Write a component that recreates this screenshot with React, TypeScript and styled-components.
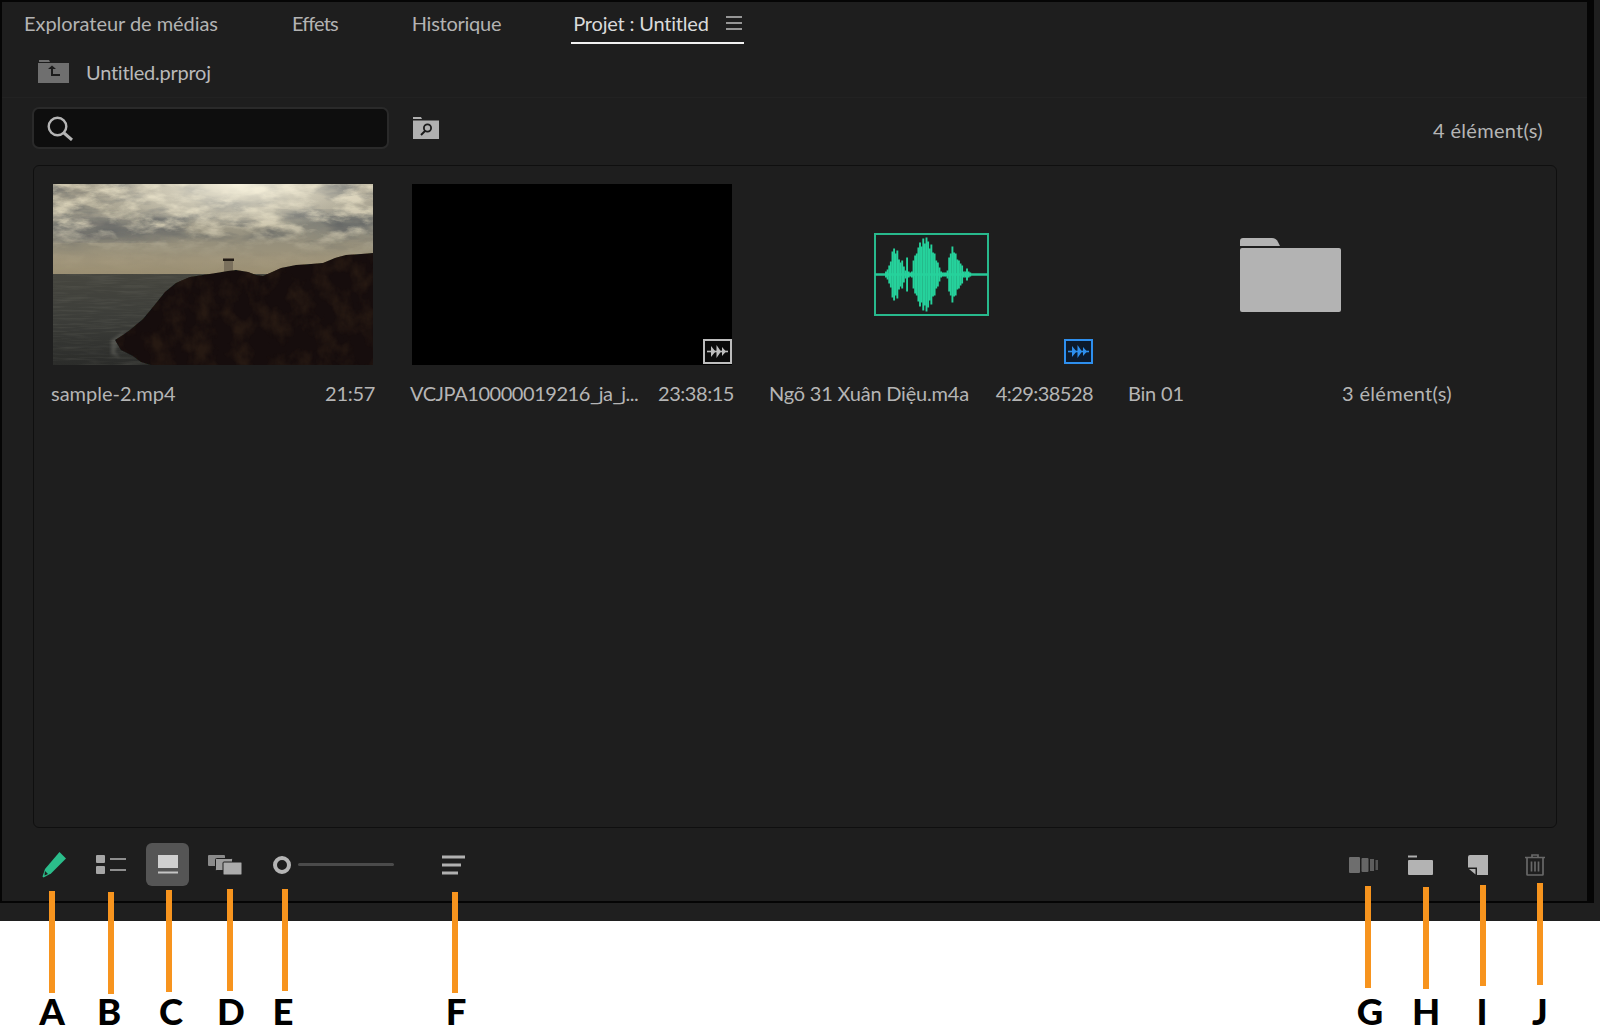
import React from 'react';
import styled, { createGlobalStyle } from 'styled-components';

type Clip = {
  name: string;
  info: string;
  nameSpacing: number;
  infoSpacing: number;
};

type Marker = {
  letter: string;
  x: number;
  top: number;
  height: number;
  labelX: number;
};

const GlobalStyle = createGlobalStyle`
  html, body {
    margin: 0;
    background: #fff;
  }
  * {
    box-sizing: border-box;
  }
`;

const Page = styled.div`
  position: relative;
  width: 1600px;
  height: 1033px;
  overflow: hidden;
  background: #fff;
  font-family: Lato, "Open Sans", sans-serif;
`;

const Frame = styled.div`
  height: 921px;
  background: #1f1f1f;
`;

const Panel = styled.div`
  display: flex;
  flex-direction: column;
  width: 1594px;
  height: 903px;
  background: #1e1e1e;
  border-top: 2px solid #050505;
  border-left: 2px solid #050505;
  border-right: 7px solid #050505;
  border-bottom: 2px solid #050505;
`;

const Tabs = styled.div`
  display: flex;
  align-items: flex-start;
  gap: 70px;
  height: 45px;
  padding-left: 20px;
`;

const Tab = styled.div<{ $active?: boolean; $spacing?: number }>`
  display: flex;
  align-items: center;
  gap: 17px;
  height: 42px;
  margin-left: ${(p) => (p.$active ? -2 : 0)}px;
  padding: 1px 2px 0;
  font-size: 20px;
  letter-spacing: ${(p) => p.$spacing ?? -0.05}px;
  color: ${(p) => (p.$active ? '#dadada' : '#b3b3b3')};
  border-bottom: 2px solid ${(p) => (p.$active ? '#f2f2f2' : 'transparent')};
`;

const Breadcrumb = styled.div`
  display: flex;
  align-items: center;
  gap: 17px;
  height: 50px;
  margin: 0 0 0 36px;
  font-size: 20px;
  letter-spacing: -0.25px;
  color: #b9b9b9;
`;

const SearchRow = styled.div`
  display: flex;
  align-items: center;
  height: 63px;
  margin-bottom: 6px;
  padding: 0 44px 0 30px;
  border-top: 1px solid #222;
`;

const SearchBox = styled.div`
  display: flex;
  align-items: center;
  width: 357px;
  height: 42px;
  padding-left: 13px;
  background: #0e0e0e;
  border: 2px solid #2a2a2a;
  border-radius: 7px;
`;

const FolderSearch = styled.div`
  display: flex;
  margin-left: 24px;
`;

const Count = styled.div`
  margin: 4px 0 0 auto;
  font-size: 20px;
  letter-spacing: 0.3px;
  color: #b5b5b5;
`;

const Content = styled.div`
  width: 1524px;
  height: 666px;
  margin-left: 31px;
  padding: 18px 19px;
  border: 1px solid #0f0f0f;
  border-radius: 6px;
`;

const Grid = styled.div`
  display: grid;
  grid-template-columns: repeat(4, 320px);
  column-gap: 39px;
`;

const Card = styled.div`
  display: flex;
  flex-direction: column;
`;

const Thumb = styled.div<{ $black?: boolean }>`
  position: relative;
  display: flex;
  align-items: center;
  justify-content: center;
  height: 181px;
  background: ${(p) => (p.$black ? '#000' : 'transparent')};
`;

const Badge = styled.div<{ $right: number }>`
  position: absolute;
  right: ${(p) => p.$right}px;
  bottom: 1px;
  display: flex;
`;

const CardLabel = styled.div`
  display: flex;
  justify-content: space-between;
  align-items: center;
  height: 24px;
  margin: 16px -2px 0 -2px;
  font-size: 20px;
  color: #b5b5b5;
`;

const LabelText = styled.span<{ $spacing: number }>`
  letter-spacing: ${(p) => p.$spacing}px;
`;

const Toolbar = styled.div`
  display: flex;
  align-items: center;
  height: 73px;
  padding: 0 31px 0 30px;
`;

const ToolButton = styled.div<{ $selected?: boolean }>`
  display: flex;
  align-items: center;
  justify-content: center;
  width: 43px;
  height: 43px;
  margin-right: 14px;
  border-radius: 6px;
  background: ${(p) => (p.$selected ? '#555' : 'transparent')};

  &:last-child {
    margin-right: 0;
  }
`;

const ZoomSlider = styled.div`
  display: flex;
  align-items: center;
  width: 121px;
  margin: 0 38px 0 13px;
`;

const ZoomKnob = styled.div`
  flex: none;
  width: 18px;
  height: 18px;
  border: 4px solid #b5b5b5;
  border-radius: 50%;
`;

const ZoomTrack = styled.div`
  flex: 1;
  height: 3px;
  margin-left: 7px;
  background: #4b4b4b;
  border-radius: 2px;
`;

const ToolGroup = styled.div`
  display: flex;
  margin-left: auto;
`;

const MarkerLine = styled.div<{ $x: number; $top: number; $height: number }>`
  position: absolute;
  left: ${(p) => p.$x}px;
  top: ${(p) => p.$top}px;
  width: 6px;
  height: ${(p) => p.$height}px;
  background: #f7941e;
`;

const MarkerLetter = styled.div<{ $x: number }>`
  position: absolute;
  left: ${(p) => p.$x - 30}px;
  top: 991px;
  width: 60px;
  text-align: center;
  font-family: Lato, sans-serif;
  font-size: 36.5px;
  font-weight: 900;
  line-height: 40px;
  color: #000;
`;

const clips: Clip[] = [
  { name: 'sample-2.mp4', info: '21:57', nameSpacing: 0, infoSpacing: -0.3 },
  { name: 'VCJPA10000019216_ja_j...', info: '23:38:15', nameSpacing: -0.45, infoSpacing: -0.45 },
  { name: 'Ngõ 31 Xuân Diệu.m4a', info: '4:29:38528', nameSpacing: -0.2, infoSpacing: -0.55 },
  { name: 'Bin 01', info: '3 élément(s)', nameSpacing: -0.2, infoSpacing: 0.3 },
];

const markers: Marker[] = [
  { letter: 'A', x: 49, top: 891, height: 102, labelX: 52 },
  { letter: 'B', x: 108, top: 892, height: 102, labelX: 109 },
  { letter: 'C', x: 166, top: 890, height: 102, labelX: 171 },
  { letter: 'D', x: 227, top: 889, height: 102, labelX: 231 },
  { letter: 'E', x: 282, top: 889, height: 102, labelX: 283 },
  { letter: 'F', x: 452, top: 892, height: 101, labelX: 456 },
  { letter: 'G', x: 1365, top: 886, height: 102, labelX: 1370 },
  { letter: 'H', x: 1423, top: 887, height: 102, labelX: 1426 },
  { letter: 'I', x: 1480, top: 885, height: 101, labelX: 1482 },
  { letter: 'J', x: 1537, top: 883, height: 102, labelX: 1540 },
];

const waveHeights = [
  3, 5, 9, 13, 23, 26, 21, 24, 15, 12, 14, 8, 4, 17, 3, 2, 3, 14, 19, 21, 27, 32, 28, 36, 31, 37, 33, 26,
  30, 22, 21, 14, 12, 7, 3, 2, 2, 2, 4, 17, 21, 28, 22, 21, 15, 14, 11, 9, 3, 3, 6, 3, 2,
];

const MenuIcon = () => (
  <svg width="16" height="14" viewBox="0 0 16 14">
    <path d="M0 1h16M0 7h16M0 13h16" stroke="#969696" strokeWidth="2.2" />
  </svg>
);

const UpFolderIcon = () => (
  <svg width="31" height="23" viewBox="0 0 31 23">
    <path d="M1 0h10l1 2H1z" fill="#6f6f6f" />
    <path d="M0 3h31v20H0z" fill="#6f6f6f" />
    <path d="M10 9l4-3.5L18 9h-3v5h7v2h-9V9z" fill="#1b1b1b" />
  </svg>
);

const SearchIcon = () => (
  <svg width="26" height="25" viewBox="0 0 26 25">
    <circle cx="10.5" cy="10.5" r="8.8" fill="none" stroke="#b5b5b5" strokeWidth="2.4" />
    <path d="M17 17l8 7" stroke="#b5b5b5" strokeWidth="3" />
  </svg>
);

const FolderSearchIcon = () => (
  <svg width="26" height="22" viewBox="0 0 26 22">
    <path d="M0 0h8l1 2H0z" fill="#b0b0b0" />
    <path d="M0 3.5h26V22H0z" fill="#b0b0b0" />
    <circle cx="14.5" cy="11" r="3.6" fill="none" stroke="#1b1b1b" strokeWidth="1.8" />
    <path d="M12 14l-4 4" stroke="#1b1b1b" strokeWidth="2" />
  </svg>
);

const CLIFF =
  'M62 156L70 151L77 146L90 135L100 123L112 108L123 99L137 93L150 91L163 89L175 87L183 86L195 88L203 91L210 92L217 89L228 84L243 81L258 80L270 79L282 74L293 71L308 70L320 69V181H98L88 178L80 172L68 166Z';

const PhotoThumb = () => (
  <svg width="320" height="181" viewBox="0 0 320 181">
    <defs>
      <linearGradient id="sky" x1="0" y1="0" x2="0" y2="1">
        <stop offset="0" stopColor="#a39d8b" />
        <stop offset="0.35" stopColor="#a7a290" />
        <stop offset="0.6" stopColor="#938e7c" />
        <stop offset="0.85" stopColor="#a0957a" />
        <stop offset="1" stopColor="#9a8e72" />
      </linearGradient>
      <linearGradient id="sea" x1="0" y1="0" x2="0" y2="1">
        <stop offset="0" stopColor="#46463f" />
        <stop offset="0.5" stopColor="#3c3d39" />
        <stop offset="1" stopColor="#2b2c2a" />
      </linearGradient>
      <radialGradient id="glow" cx="0.58" cy="0" r="0.5">
        <stop offset="0" stopColor="#fbf6e2" stopOpacity="0.95" />
        <stop offset="1" stopColor="#f1ecd8" stopOpacity="0" />
      </radialGradient>
      <linearGradient id="cloudFade" x1="0" y1="0" x2="0" y2="1">
        <stop offset="0" stopColor="#fff" />
        <stop offset="0.45" stopColor="#fff" stopOpacity="0.8" />
        <stop offset="0.75" stopColor="#fff" stopOpacity="0.1" />
        <stop offset="1" stopColor="#fff" stopOpacity="0" />
      </linearGradient>
      <mask id="cloudMask">
        <rect width="320" height="90" fill="url(#cloudFade)" />
      </mask>
      <clipPath id="cliffClip">
        <path d={CLIFF} />
      </clipPath>
      <filter id="clouds" x="0" y="0" width="100%" height="100%" colorInterpolationFilters="sRGB">
        <feTurbulence type="fractalNoise" baseFrequency="0.035 0.085" numOctaves="5" seed="7" />
        <feColorMatrix values="0 0 0 0 0.85  0 0 0 0 0.82  0 0 0 0 0.72  3 0 0 0 -1.3" />
      </filter>
      <filter id="shade" x="0" y="0" width="100%" height="100%" colorInterpolationFilters="sRGB">
        <feTurbulence type="fractalNoise" baseFrequency="0.022 0.07" numOctaves="4" seed="21" />
        <feColorMatrix values="0 0 0 0 0.38  0 0 0 0 0.39  0 0 0 0 0.39  3 0 0 0 -1.35" />
      </filter>
      <filter id="ripple" x="0" y="0" width="100%" height="100%" colorInterpolationFilters="sRGB">
        <feTurbulence type="fractalNoise" baseFrequency="0.03 0.45" numOctaves="3" seed="4" />
        <feColorMatrix values="0 0 0 0 0.5  0 0 0 0 0.5  0 0 0 0 0.46  1.3 0 0 0 -0.55" />
      </filter>
      <filter id="rock" x="0" y="0" width="100%" height="100%" colorInterpolationFilters="sRGB">
        <feTurbulence type="fractalNoise" baseFrequency="0.05 0.04" numOctaves="4" seed="12" />
        <feColorMatrix values="0 0 0 0 0.17  0 0 0 0 0.115  0 0 0 0 0.08  2.6 0 0 0 -1.1" />
      </filter>
      <filter id="soft">
        <feGaussianBlur stdDeviation="0.5" />
      </filter>
      <filter id="foam">
        <feGaussianBlur stdDeviation="1.6" />
      </filter>
      <filter id="haze">
        <feGaussianBlur stdDeviation="7" />
      </filter>
    </defs>
    <rect width="320" height="91" fill="url(#sky)" />
    <g filter="url(#haze)">
      <ellipse cx="45" cy="46" rx="85" ry="10" fill="#5e6162" opacity="0.7" />
      <ellipse cx="285" cy="38" rx="55" ry="10" fill="#646768" opacity="0.6" />
    </g>
    <g mask="url(#cloudMask)">
      <rect width="320" height="90" filter="url(#shade)" />
      <rect width="320" height="90" filter="url(#clouds)" />
    </g>
    <rect width="320" height="90" fill="url(#glow)" />
    <rect y="90" width="320" height="91" fill="url(#sea)" />
    <rect y="90" width="150" height="91" filter="url(#ripple)" opacity="0.35" />
    <path d="M58 156l14-9-4 8-6 12 5 7-9-4z" fill="#85857d" opacity="0.35" filter="url(#foam)" />
    <g filter="url(#soft)">
      <path d="M171 76h9v12h-9z" fill="#7a705d" />
      <path d="M170 74.500h11v2.500h-11z" fill="#241a14" />
      <path d="M150 92l15-3 4 2-10 3z" fill="#8c7f6c" />
      <path d={CLIFF} fill="#130d0a" />
    </g>
    <g clipPath="url(#cliffClip)">
      <rect x="60" y="68" width="260" height="113" filter="url(#rock)" opacity="0.8" />
    </g>
  </svg>
);

const AudioIcon = () => (
  <svg width="115" height="83" viewBox="0 0 115 83">
    <rect x="1" y="1" width="113" height="81" fill="none" stroke="#28b98d" strokeWidth="2" />
    <path d="M1 41.500h113" stroke="#28c797" strokeWidth="2.400" />
    {waveHeights.map((h, i) => (
      <path key={i} d={`M${12 + i * 1.62} ${41.5 - h}v${h * 2}`} stroke="#26d29c" strokeWidth="1.900" />
    ))}
  </svg>
);

const AudioBadge = ({ color, fill }: { color: string; fill: string }) => (
  <svg width="29" height="25" viewBox="0 0 29 25">
    <rect x="1" y="1" width="27" height="23" fill={fill} stroke={color} strokeWidth="2" />
    <path d="M4 12.500h21" stroke={color} strokeWidth="1.600" />
    <path d="M8 7l4.500 5.500L8 18zM13.500 6l4.500 6.500-4.500 6.500zM19 8l4 4.500-4 4.500z" fill={color} />
  </svg>
);

const FolderIcon = () => (
  <svg width="101" height="74" viewBox="0 0 101 74">
    <path d="M0 8V3q0-3 3-3h29q4 0 6 4l2 4z" fill="#b3b3b3" />
    <path d="M2 10h97q2 0 2 2v60q0 2-2 2H2q-2 0-2-2V12q0-2 2-2z" fill="#b3b3b3" />
  </svg>
);

const PencilIcon = () => (
  <svg width="24" height="26" viewBox="0 0 24 26">
    <path d="M17.500 0L24 6.500 9 21.500 1.500 25.500 0.500 24.500 3 17z" fill="#2bbd8b" />
    <path d="M3 19l3 3-3.500 1.500z" fill="#1e1e1e" />
  </svg>
);

const ListIcon = () => (
  <svg width="30" height="19" viewBox="0 0 30 19">
    <rect width="9" height="8" rx="1" fill="#a6a6a6" />
    <rect y="11" width="9" height="8" rx="1" fill="#a6a6a6" />
    <path d="M14 4h16M14 15h16" stroke="#8e8e8e" strokeWidth="2.200" />
  </svg>
);

const IconViewIcon = () => (
  <svg width="20" height="19" viewBox="0 0 20 19">
    <rect width="20" height="13" fill="#d0d0d0" />
    <path d="M0 17.500h20" stroke="#c4c4c4" strokeWidth="2" />
  </svg>
);

const FreeformIcon = () => (
  <svg width="34" height="20" viewBox="0 0 34 20">
    <rect width="17" height="11" rx="1" fill="#8a8a8a" />
    <rect x="7.500" y="3.500" width="17" height="12" rx="1" fill="#9d9d9d" stroke="#1e1e1e" />
    <rect x="15" y="7" width="19" height="13" rx="1" fill="#ababab" stroke="#1e1e1e" />
  </svg>
);

const SortIcon = () => (
  <svg width="23" height="20" viewBox="0 0 23 20">
    <path d="M0 2h23M0 10h19M0 18h16" stroke="#b0b0b0" strokeWidth="2.800" />
  </svg>
);

const AutomateIcon = () => (
  <svg width="29" height="16" viewBox="0 0 29 16">
    <rect width="11" height="16" rx="1" fill="#6e6e6e" />
    <rect x="12.500" y="1" width="7" height="14" rx="1" fill="#666" />
    <rect x="21" y="2" width="4" height="12" fill="#5d5d5d" />
    <rect x="26.500" y="3" width="2.500" height="10" fill="#555" />
  </svg>
);

const BinIcon = () => (
  <svg width="25" height="20" viewBox="0 0 25 20">
    <path d="M0 1.500h9" stroke="#afafaf" strokeWidth="2" />
    <path d="M1 5h23q1 0 1 1v13q0 1-1 1H1q-1 0-1-1V6q0-1 1-1z" fill="#b3b3b3" />
  </svg>
);

const NewItemIcon = () => (
  <svg width="20" height="20" viewBox="0 0 20 20">
    <path d="M2 0h18v20H9v-7.500H0V2q0-2 2-2z" fill="#b3b3b3" />
    <path d="M1 14h6.500v5.500z" fill="#b3b3b3" />
  </svg>
);

const TrashIcon = () => (
  <svg width="20" height="22" viewBox="0 0 20 22">
    <path d="M7 3V1h6v2M0 3.500h20M2 4v16.500q0 .500.500.500h15q.500 0 .500-.500V4" fill="none" stroke="#686868" strokeWidth="1.700" />
    <path d="M6.500 7.500v10M10 7.500v10M13.500 7.500v10" stroke="#686868" strokeWidth="1.700" />
  </svg>
);

const thumbs = [
  <Thumb key="video"><PhotoThumb /></Thumb>,
  <Thumb key="black" $black><Badge $right={0}><AudioBadge color="#bdbdbd" fill="#0a0a0a" /></Badge></Thumb>,
  <Thumb key="audio"><AudioIcon /><Badge $right={-2}><AudioBadge color="#2e8fee" fill="#0c1a2c" /></Badge></Thumb>,
  <Thumb key="bin"><FolderIcon /></Thumb>,
];

const App = () => (
  <Page>
    <GlobalStyle />
    <Frame>
      <Panel>
        <Tabs>
          <Tab>Explorateur de médias</Tab>
          <Tab $spacing={-0.9}>Effets</Tab>
          <Tab $spacing={-0.25}>Historique</Tab>
          <Tab $active $spacing={-0.2}>Projet : Untitled <MenuIcon /></Tab>
        </Tabs>
        <Breadcrumb><UpFolderIcon />Untitled.prproj</Breadcrumb>
        <SearchRow>
          <SearchBox><SearchIcon /></SearchBox>
          <FolderSearch><FolderSearchIcon /></FolderSearch>
          <Count>4 élément(s)</Count>
        </SearchRow>
        <Content>
          <Grid>
            {clips.map((clip, i) => (
              <Card key={clip.name}>
                {thumbs[i]}
                <CardLabel>
                  <LabelText $spacing={clip.nameSpacing}>{clip.name}</LabelText>
                  <LabelText $spacing={clip.infoSpacing}>{clip.info}</LabelText>
                </CardLabel>
              </Card>
            ))}
          </Grid>
        </Content>
        <Toolbar>
          <ToolButton><PencilIcon /></ToolButton>
          <ToolButton><ListIcon /></ToolButton>
          <ToolButton $selected><IconViewIcon /></ToolButton>
          <ToolButton><FreeformIcon /></ToolButton>
          <ZoomSlider>
            <ZoomKnob />
            <ZoomTrack />
          </ZoomSlider>
          <ToolButton><SortIcon /></ToolButton>
          <ToolGroup>
            <ToolButton><AutomateIcon /></ToolButton>
            <ToolButton><BinIcon /></ToolButton>
            <ToolButton><NewItemIcon /></ToolButton>
            <ToolButton><TrashIcon /></ToolButton>
          </ToolGroup>
        </Toolbar>
      </Panel>
    </Frame>
    {markers.map((m) => (
      <React.Fragment key={m.letter}>
        <MarkerLine $x={m.x} $top={m.top} $height={m.height} />
        <MarkerLetter $x={m.labelX}>{m.letter}</MarkerLetter>
      </React.Fragment>
    ))}
  </Page>
);

export default App;
